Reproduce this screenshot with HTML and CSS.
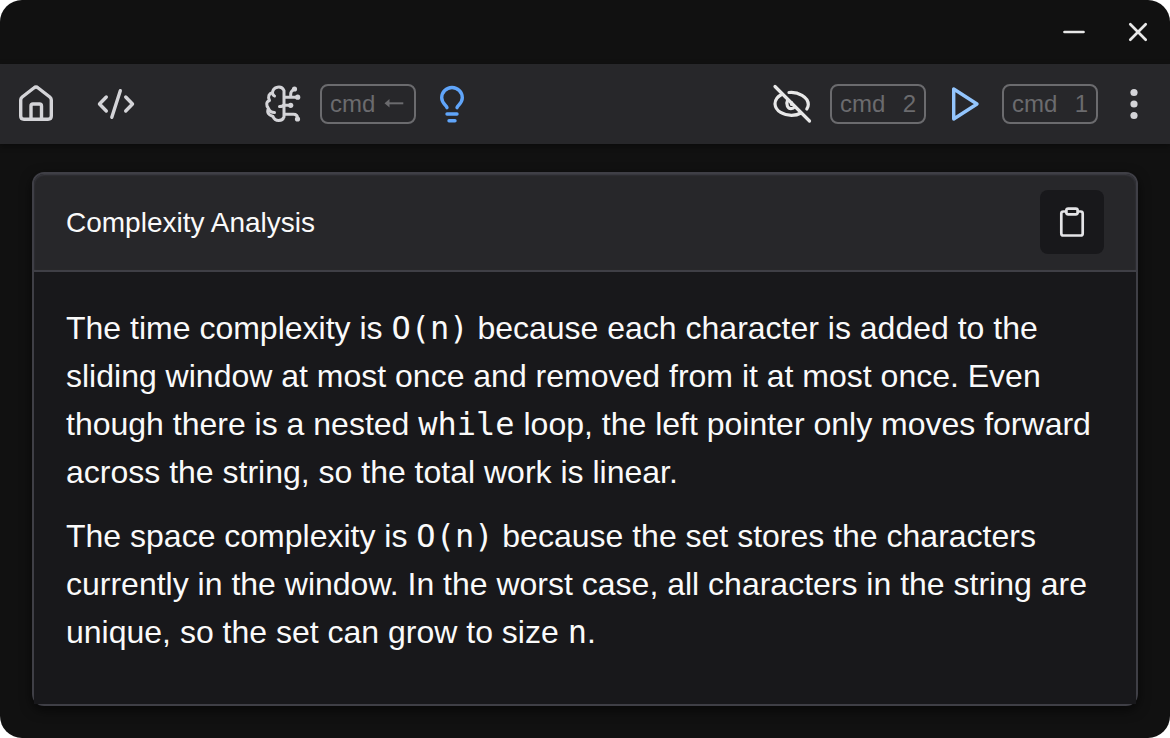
FILE: index.html
```html
<!DOCTYPE html>
<html lang="en">
<head>
<meta charset="utf-8">
<title>Complexity Analysis</title>
<link rel="stylesheet" href="styles.css">
</head>
<body>
<div class="window">
  <header class="titlebar">
    <button class="icon-button" type="button" aria-label="Minimize">
      <svg class="icon thin" viewBox="0 0 40 40"><path d="M10.500 20h19"/></svg>
    </button>
    <button class="icon-button" type="button" aria-label="Close">
      <svg class="icon thin" viewBox="0 0 40 40"><path d="M12.300 12.300l15.400 15.400M27.700 12.300L12.300 27.700"/></svg>
    </button>
  </header>
  <nav class="toolbar">
    <div class="group group-nav">
      <button class="icon-button" type="button" aria-label="Home">
        <svg class="icon" viewBox="0 0 40 40"><path d="M4.700 16Q4.700 14.300 6.200 13L17.800 4Q20 2.200 22.200 4L33.800 13Q35.300 14.300 35.300 16V32Q35.300 35.200 32 35.200H8Q4.700 35.200 4.700 32Z"/><path d="M15 35V22Q15 20 17 20H23.500Q25.500 20 25.500 22V35"/></svg>
      </button>
      <button class="icon-button" type="button" aria-label="Code">
        <svg class="icon" viewBox="0 0 40 40"><path d="M10.300 13L3.500 20l6.800 7M29.700 13l6.800 7-6.800 7M24.300 6.700L15.800 33.300"/></svg>
      </button>
    </div>
    <div class="group group-hint">
      <button class="icon-button" type="button" aria-label="Think">
        <svg class="icon brain" viewBox="0 0 40 40"><path d="M20 33C18.500 37.500 11 38 9 32.500C4.500 31 2.500 28.500 4.500 24.500C2 21.500 2 17.500 5.500 16.500C3.500 12.500 5 9.500 8.500 8.500C9 2.500 17.500 1 20 6.500V33M8.500 8.500Q8.500 11 10.500 12M20 20.500Q19 22.500 15.500 22.500M4.500 24.500Q6 28.500 10.500 28.500M20 13.200h13M20 21.300h6M20 30.300h9.500q4 0 4 4M26.700 13V10Q26.700 7 30 5.500"/><g fill="currentColor" stroke="none"><circle cx="30.500" cy="5" r="2.600"/><circle cx="33.700" cy="13.200" r="2.600"/><circle cx="26.700" cy="21.300" r="2.600"/><circle cx="33.500" cy="35" r="2.600"/></g></svg>
      </button>
      <kbd class="shortcut"><span>cmd</span><svg class="arrow" viewBox="0 0 24 20"><path d="M6 9.300h15.300"/><path d="M2.500 9.300L7.500 5v8.600z" fill="currentColor" stroke="none"/></svg></kbd>
      <button class="icon-button hint" type="button" aria-label="Hint">
        <svg class="icon" viewBox="0 0 40 40"><path d="M15 23.700C14 21 9.700 19 9.700 13.800a10.300 10.300 0 0 1 20.600 0C30.300 19 26 21 25 23.700M15 30h10M17 36.700h6"/></svg>
      </button>
    </div>
    <div class="group group-run">
      <button class="icon-button bright" type="button" aria-label="Hide">
        <svg class="icon eye" viewBox="0 0 40 40"><path d="M3 2.500l34.500 34.500"/><path d="M10 10.300C5.500 12.500 3 16 3 20C3.500 27.500 12 31.300 19.500 31.300Q25 31.300 29 29M17 8.500C26 7.500 36.300 13 36.300 20.500Q36.300 23 34.800 25M15.500 16.500C13.500 20.500 16 24.700 19 24.700Q21.500 24.700 22.500 23M19.500 18.500v2"/></svg>
      </button>
      <kbd class="shortcut"><span>cmd</span><span>2</span></kbd>
      <button class="icon-button run" type="button" aria-label="Run">
        <svg class="icon" viewBox="0 0 40 40"><path d="M9.700 5v30L33 20z"/></svg>
      </button>
      <kbd class="shortcut"><span>cmd</span><span>1</span></kbd>
      <button class="icon-button" type="button" aria-label="More">
        <svg class="icon dots" viewBox="0 0 36 40"><g fill="currentColor" stroke="none"><circle cx="18" cy="8.500" r="3.600"/><circle cx="18" cy="20" r="3.600"/><circle cx="18" cy="31.500" r="3.600"/></g></svg>
      </button>
    </div>
  </nav>
  <main class="content">
    <section class="card">
      <header class="card-header">
        <h1 class="card-title">Complexity Analysis</h1>
        <button class="copy" type="button" aria-label="Copy">
          <svg class="icon thin" viewBox="0 0 40 40"><path d="M14 9.500H11.300Q9.300 9.500 9.300 11.500V31.500Q9.300 33.500 11.300 33.500H28.700Q30.700 33.500 30.700 31.500V11.500Q30.700 9.500 28.700 9.500H26"/><rect x="14.300" y="6.700" width="11.400" height="5.600" rx="2"/></svg>
        </button>
      </header>
      <div class="card-body">
        <p>The time complexity is <code>O(n)</code> because each character is added to the sliding window at most once and removed from it at most once. Even though there is a nested <code>while</code> loop, the left pointer only moves forward across the string, so the total work is linear.</p>
        <p>The space complexity is <code>O(n)</code> because the set stores the characters currently in the window. In the worst case, all characters in the string are unique, so the set can grow to size <code>n</code>.</p>
      </div>
    </section>
  </main>
</div>
</body>
</html>
```
FILE: styles.css
```css
* { box-sizing: border-box; }
body {
  margin: 0;
  background: #fff;
  font-family: "Liberation Sans", Arial, sans-serif;
  color: #fafafa;
}
.window {
  display: flex;
  flex-direction: column;
  min-height: 100vh;
  background: #111;
  border-radius: 22px;
  overflow: hidden;
}
.titlebar {
  display: flex;
  justify-content: flex-end;
  align-items: center;
  gap: 24px;
  height: 64px;
  padding: 0 12px;
  color: #e8e8e8;
}
.icon-button, .copy {
  display: flex;
  align-items: center;
  justify-content: center;
  flex-shrink: 0;
  padding: 0;
  border: 0;
  background: none;
  color: inherit;
}
.icon {
  display: block;
  width: 40px;
  height: 40px;
  fill: none;
  stroke: currentColor;
  stroke-width: 3.4;
  stroke-linecap: round;
  stroke-linejoin: round;
}
.icon.thin { stroke-width: 2.7; }
.icon.eye { stroke-width: 3.2; }
.icon.brain { stroke-width: 3; }
.icon.dots { width: 36px; }
.toolbar {
  display: flex;
  align-items: center;
  height: 80px;
  padding: 0 18px 0 16px;
  background: #27272a;
  color: #d4d4d8;
  box-shadow: 0 2px 6px rgba(0, 0, 0, 0.4);
}
.group { display: flex; align-items: center; gap: 16px; }
.group-nav { gap: 40px; }
.group-hint { margin-left: 128px; }
.group-run { gap: 18px; margin-left: auto; }
.bright { color: #e8e8e8; }
.hint { color: #60a5fa; }
.run { color: #93c5fd; }
.shortcut {
  display: flex;
  align-items: center;
  justify-content: space-between;
  width: 96px;
  height: 40px;
  padding: 0 8px;
  border: 2px solid #6b6b6e;
  border-radius: 8px;
  color: #6b6b6e;
  font: 24px/36px "Liberation Sans", Arial, sans-serif;
}
.arrow {
  width: 24px;
  height: 20px;
  fill: none;
  stroke: currentColor;
  stroke-width: 2;
}
.content {
  display: flex;
  flex: 1;
  padding: 28px 32px 32px;
}
.card {
  display: flex;
  flex: 1;
  flex-direction: column;
  border: 2px solid #3f3f46;
  border-radius: 12px;
  background: #18181b;
  box-shadow: 0 4px 12px rgba(0, 0, 0, 0.6);
}
.card-header {
  display: flex;
  align-items: center;
  justify-content: space-between;
  height: 98px;
  padding: 0 32px;
  border-bottom: 2px solid #3f3f46;
  border-radius: 10px 10px 0 0;
  background: #27272a;
  box-shadow: inset 0 1px 2px #3f3f46;
}
.card-title {
  margin: 0;
  padding-top: 2px;
  font-size: 28px;
  font-weight: 400;
  line-height: 40px;
}
.copy {
  width: 64px;
  height: 64px;
  border-radius: 8px;
  background: #18181b;
  color: #e4e4e7;
}
.card-body {
  flex: 1;
  padding: 32px;
  background: #18181b;
  font-size: 32px;
  line-height: 48px;
}
.card-body p { margin: 0 0 16px; }
.card-body code {
  font-family: "DejaVu Sans Mono", monospace;
  font-size: 32px;
  line-height: 1;
}
```
